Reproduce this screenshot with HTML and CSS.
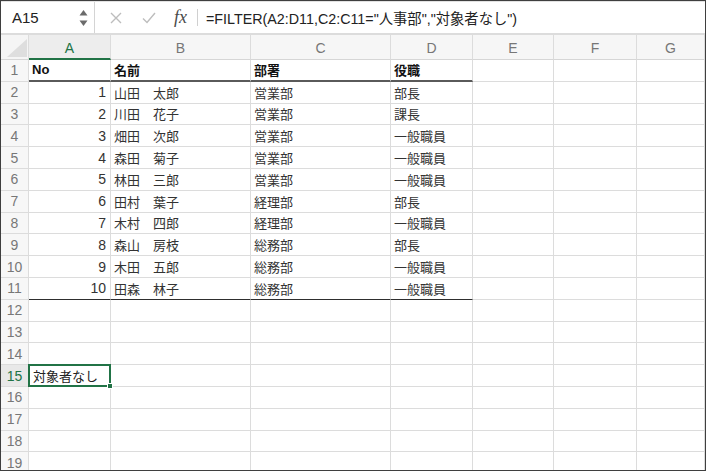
FILE: index.html
```html
<!DOCTYPE html>
<html lang="ja">
<head>
<meta charset="utf-8">
<link rel="stylesheet" href="styles.css">
</head>
<body>
<div class="frame">
  <div class="fbar">
    <div class="namebox">
      <span class="nb-text">A15</span>
      <svg class="spin" width="9" height="18" viewBox="0 0 9 18"><polygon points="4.5,1 8.5,6.5 0.5,6.5" fill="#6b6b6b"/><polygon points="0.5,11.5 8.5,11.5 4.5,17" fill="#6b6b6b"/></svg>
    </div>
    <div class="fbtns">
      <span class="fbtn"><svg width="12" height="12" viewBox="0 0 12 12"><path d="M1 1 L11 11 M11 1 L1 11" stroke="#bdbdbd" stroke-width="1.4" fill="none"/></svg></span>
      <span class="fbtn"><svg width="14" height="12" viewBox="0 0 14 12"><path d="M1 6.5 L5 10.5 L13 1" stroke="#bdbdbd" stroke-width="1.4" fill="none"/></svg></span>
      <span class="fbtn fx">fx</span>
      <span class="fsep"></span>
    </div>
    <div class="formula">=FILTER(A2:D11,C2:C11="人事部","対象者なし")</div>
  </div>
  <div class="sheet">
    <div class="corner"><svg width="20" height="18" viewBox="0 0 20 18"><polygon points="20,0 20,18 0,18" fill="#dedede"/></svg></div>
    <div class="ch ch-sel">A</div><div class="ch">B</div><div class="ch">C</div><div class="ch">D</div><div class="ch">E</div><div class="ch">F</div><div class="ch">G</div>

    <div class="rh">1</div><div class="c b top">No</div><div class="c b top">名前</div><div class="c b top">部署</div><div class="c b top">役職</div><div class="c"></div><div class="c"></div><div class="c"></div>
    <div class="rh">2</div><div class="c n">1</div><div class="c">山田　太郎</div><div class="c">営業部</div><div class="c">部長</div><div class="c"></div><div class="c"></div><div class="c"></div>
    <div class="rh">3</div><div class="c n">2</div><div class="c">川田　花子</div><div class="c">営業部</div><div class="c">課長</div><div class="c"></div><div class="c"></div><div class="c"></div>
    <div class="rh">4</div><div class="c n">3</div><div class="c">畑田　次郎</div><div class="c">営業部</div><div class="c">一般職員</div><div class="c"></div><div class="c"></div><div class="c"></div>
    <div class="rh">5</div><div class="c n">4</div><div class="c">森田　菊子</div><div class="c">営業部</div><div class="c">一般職員</div><div class="c"></div><div class="c"></div><div class="c"></div>
    <div class="rh">6</div><div class="c n">5</div><div class="c">林田　三郎</div><div class="c">営業部</div><div class="c">一般職員</div><div class="c"></div><div class="c"></div><div class="c"></div>
    <div class="rh">7</div><div class="c n">6</div><div class="c">田村　葉子</div><div class="c">経理部</div><div class="c">部長</div><div class="c"></div><div class="c"></div><div class="c"></div>
    <div class="rh">8</div><div class="c n">7</div><div class="c">木村　四郎</div><div class="c">経理部</div><div class="c">一般職員</div><div class="c"></div><div class="c"></div><div class="c"></div>
    <div class="rh">9</div><div class="c n">8</div><div class="c">森山　房枝</div><div class="c">総務部</div><div class="c">部長</div><div class="c"></div><div class="c"></div><div class="c"></div>
    <div class="rh">10</div><div class="c n">9</div><div class="c">木田　五郎</div><div class="c">総務部</div><div class="c">一般職員</div><div class="c"></div><div class="c"></div><div class="c"></div>
    <div class="rh">11</div><div class="c n bot">10</div><div class="c bot">田森　林子</div><div class="c bot">総務部</div><div class="c bot">一般職員</div><div class="c"></div><div class="c"></div><div class="c"></div>
    <div class="rh">12</div><div class="c"></div><div class="c"></div><div class="c"></div><div class="c"></div><div class="c"></div><div class="c"></div><div class="c"></div>
    <div class="rh">13</div><div class="c"></div><div class="c"></div><div class="c"></div><div class="c"></div><div class="c"></div><div class="c"></div><div class="c"></div>
    <div class="rh">14</div><div class="c"></div><div class="c"></div><div class="c"></div><div class="c"></div><div class="c"></div><div class="c"></div><div class="c"></div>
    <div class="rh rh-sel">15</div><div class="c sel">対象者なし<span class="selbox"></span><span class="handle"></span></div><div class="c"></div><div class="c"></div><div class="c"></div><div class="c"></div><div class="c"></div><div class="c"></div>
    <div class="rh">16</div><div class="c"></div><div class="c"></div><div class="c"></div><div class="c"></div><div class="c"></div><div class="c"></div><div class="c"></div>
    <div class="rh">17</div><div class="c"></div><div class="c"></div><div class="c"></div><div class="c"></div><div class="c"></div><div class="c"></div><div class="c"></div>
    <div class="rh">18</div><div class="c"></div><div class="c"></div><div class="c"></div><div class="c"></div><div class="c"></div><div class="c"></div><div class="c"></div>
    <div class="rh">19</div><div class="c"></div><div class="c"></div><div class="c"></div><div class="c"></div><div class="c"></div><div class="c"></div><div class="c"></div>
  </div>
</div>
</body>
</html>
```

FILE: styles.css
```css
* { box-sizing: border-box; }
html, body { margin: 0; padding: 0; background: #fff; }
body {
  font-family: "Liberation Sans", "Noto Sans CJK JP", sans-serif;
  font-size: 13px;
  color: #333;
}
.frame {
  width: 706px;
  height: 471px;
  border: 1px solid #3f3f3f;
  overflow: hidden;
  display: flex;
  flex-direction: column;
}
.fbar {
  height: 34px;
  flex: none;
  display: flex;
  align-items: stretch;
  border-top: 1px solid #e2e2e2;
  border-bottom: 2px solid #dcdcdc;
  background: #fff;
}
.namebox {
  width: 94px;
  display: flex;
  align-items: center;
  justify-content: space-between;
  padding: 0 6px 0 11px;
  border-right: 1px solid #d4d4d4;
}
.nb-text {
  font-size: 15px;
  color: #222;
}
.spin { display: block; }
.fbtns {
  display: flex;
  align-items: center;
  padding-left: 4px;
}
.fbtn {
  width: 33px;
  display: flex;
  justify-content: center;
  align-items: center;
}
.fx {
  font-family: "Liberation Serif", "DejaVu Serif", serif;
  font-style: italic;
  font-size: 18px;
  color: #4a4a4a;
  width: 31px;
}
.fsep {
  width: 1px;
  height: 17px;
  background: #d0d0d0;
  margin-left: 1px;
}
.formula {
  display: flex;
  align-items: center;
  padding-left: 8px;
  font-size: 14.3px;
  color: #222;
}
.sheet {
  flex: 1;
  display: grid;
  grid-template-columns: 28px 82px 140px 140px 82px 81px 83px 1fr;
  grid-template-rows: 25px;
  grid-auto-rows: 21.8px;
  overflow: hidden;
}
.corner {
  background: #f5f5f5;
  border-right: 1px solid #dcdcdc;
  border-bottom: 1px solid #d6d6d6;
  display: flex;
  align-items: flex-end;
  justify-content: flex-end;
  padding: 0 1px 2px 0;
}
.corner svg { display: block; }
.ch {
  background: #f6f6f6;
  border-right: 1px solid #dcdcdc;
  border-bottom: 1px solid #d6d6d6;
  display: flex;
  align-items: center;
  justify-content: center;
  padding-top: 2px;
  color: #777;
  font-size: 14px;
}
.ch-sel {
  color: #217346;
  background: #ededed;
  border-bottom: 2px solid #217346;
}
.rh {
  background: #f7f7f7;
  border-right: 1px solid #dcdcdc;
  border-bottom: 1px solid #dcdcdc;
  display: flex;
  align-items: center;
  justify-content: center;
  color: #777;
  font-size: 14px;
}
.rh-sel {
  color: #217346;
  background: #e8e8e8;
}
.c {
  border-right: 1px solid #dcdcdc;
  border-bottom: 1px solid #dcdcdc;
  display: flex;
  align-items: center;
  padding: 0 4px 0 3px;
  white-space: nowrap;
  color: #333;
}
.n {
  justify-content: flex-end;
  font-size: 14px;
}
.b {
  font-weight: bold;
  color: #111;
}
.top { border-bottom: 2px solid #5a5a5a; }
.bot { border-bottom: 1px solid #2e2e2e; }
.sel { position: relative; color: #222; padding-left: 4px; }
.selbox {
  position: absolute;
  left: -1px;
  top: -1px;
  right: -1px;
  bottom: -1px;
  border: 2px solid #217346;
}
.handle {
  position: absolute;
  right: -3px;
  bottom: -3px;
  width: 6px;
  height: 6px;
  background: #217346;
  border: 1px solid #fff;
}
```
